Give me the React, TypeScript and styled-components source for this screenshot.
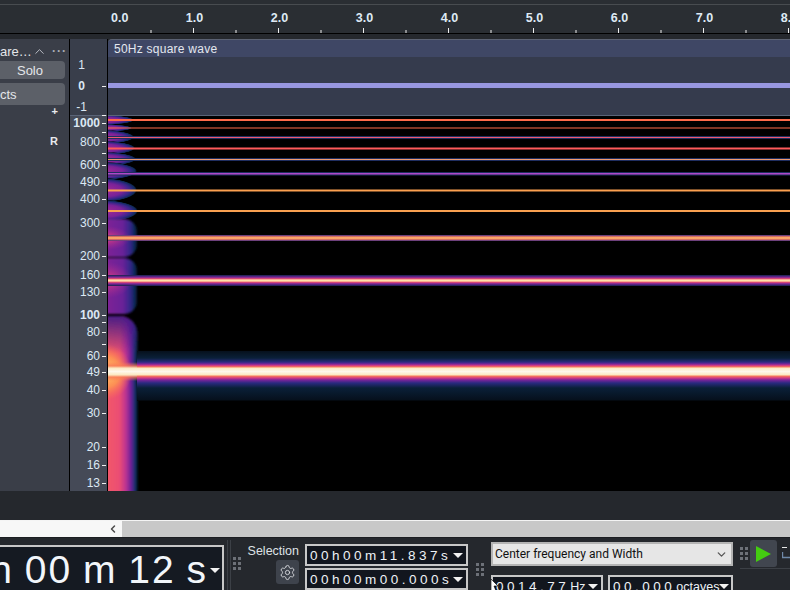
import React from 'react'
import styled, { createGlobalStyle } from 'styled-components'
import { ChevronDown, ChevronLeft, ChevronUp, Settings } from 'lucide-react'

const GlobalStyle = createGlobalStyle`
  html, body {
    margin: 0;
    padding: 0;
    background: #25282d;
    overflow: hidden;
  }
  * {
    box-sizing: border-box;
  }
`

const Page = styled.div`
  width: 790px;
  height: 590px;
  display: flex;
  flex-direction: column;
  overflow: hidden;
  background: #25282d;
  font-family: 'Liberation Sans', Arial, sans-serif;
`

const TopStrip = styled.div`
  height: 5px;
  flex: none;
  background: #2a2e33;
  border-bottom: 1px solid #484c50;
`

const Ruler = styled.div`
  height: 29px;
  flex: none;
  position: relative;
  background: #2a2e33;
  border-bottom: 1px solid #000;
`

const RulerLabels = styled.div`
  display: flex;
  padding: 6px 0 0 111px;
  color: #dfeaf5;
  font-size: 12.5px;
  font-weight: bold;
  line-height: 14px;
  white-space: nowrap;
`

const RulerLabel = styled.span<{ $first?: boolean }>`
  flex: none;
  width: ${({ $first }) => ($first ? '41px' : '85px')};
  text-align: ${({ $first }) => ($first ? 'left' : 'center')};
`

const RulerTicks = styled.svg`
  position: absolute;
  left: 0;
  bottom: 0;
`

const Gap = styled.div`
  height: 5px;
  flex: none;
  background: #25282d;
`

const TrackRow = styled.div`
  height: 452px;
  flex: none;
  display: flex;
`

const TrackPanel = styled.div`
  width: 70px;
  flex: none;
  display: flex;
  flex-direction: column;
  align-items: stretch;
  background: #3a3e48;
  border-right: 1px solid #000;
  overflow: hidden;
  color: #e4e6ea;
`

const TrackTitle = styled.div`
  height: 22px;
  display: flex;
  align-items: center;
  font-size: 13px;
  white-space: nowrap;
  padding-top: 2px;
`

const TrackName = styled.span`
  width: 32px;
`

const Dots = styled.span`
  margin-left: 5px;
  letter-spacing: 1px;
  font-size: 12px;
  line-height: 6px;
  color: #a8acb4;
  font-weight: bold;
`

const PanelButton = styled.div<{ $tall?: boolean; $center?: boolean }>`
  height: ${({ $tall }) => ($tall ? '22px' : '18px')};
  width: 65px;
  margin-bottom: ${({ $tall }) => ($tall ? '0' : '4px')};
  border-radius: 0 4px 4px 0;
  background: #5c6068;
  font-size: 13px;
  display: flex;
  align-items: center;
  justify-content: ${({ $center }) => ($center ? 'flex-end' : 'flex-start')};
  padding-right: ${({ $center }) => ($center ? '22px' : '0')};
`

const SmallMark = styled.div<{ $gap: number }>`
  width: 58px;
  margin-top: ${({ $gap }) => $gap}px;
  text-align: right;
  font-size: 11px;
  line-height: 12px;
  font-weight: bold;
  color: #e8eaee;
`

const VScale = styled.div`
  width: 38px;
  flex: none;
  display: flex;
  flex-direction: column;
  border-right: 1px solid #000;
`

const ScaleZone = styled.div<{ $wave?: boolean }>`
  position: relative;
  flex: none;
  height: ${({ $wave }) => ($wave ? '77px' : '375px')};
  background: ${({ $wave }) => ($wave ? '#393e4b' : '#454a57')};
  border-bottom: ${({ $wave }) => ($wave ? '1px solid #5a6478' : 'none')};
`

const ScaleMark = styled.div<{ $y: number; $strong?: boolean }>`
  position: absolute;
  right: 0;
  top: ${({ $y }) => $y}px;
  height: 14px;
  margin-top: -7px;
  display: flex;
  align-items: center;
  gap: 2px;
  font-size: 12px;
  line-height: 14px;
  color: #dce8f4;
  font-weight: ${({ $strong }) => ($strong ? 'bold' : 'normal')};

  &::after {
    content: '';
    width: 4px;
    height: 1px;
    background: #f0f0f0;
    margin-right: 1px;
  }
`

const WaveMark = styled.div<{ $y: number; $strong?: boolean }>`
  position: absolute;
  left: 0;
  width: 23px;
  top: ${({ $y }) => $y}px;
  margin-top: -7px;
  text-align: center;
  font-size: 12px;
  line-height: 14px;
  color: #dce8f4;
  font-weight: ${({ $strong }) => ($strong ? 'bold' : 'normal')};
`

const ClipColumn = styled.div`
  flex: 1;
  min-width: 0;
  display: flex;
  flex-direction: column;
`

const ClipHeader = styled.div`
  height: 18px;
  flex: none;
  padding: 2px 0 0 6px;
  border-top: 1px solid #5b6273;
  border-top-left-radius: 4px;
  background: #3f4765;
  color: #e4e8f0;
  font-size: 12px;
  line-height: 14px;
  letter-spacing: 0.25px;
`

const WaveArea = styled.div`
  height: 59px;
  flex: none;
  padding-top: 26px;
  background: #353b4d;
  border-bottom: 1px solid #5a6478;
`

const WaveLine = styled.div`
  height: 5px;
  background: #9897e0;
`

const Spectrogram = styled.svg`
  display: block;
  flex: none;
`

const Band = styled.div`
  height: 29px;
  flex: none;
  background: #25282d;
`

const ScrollRow = styled.div`
  height: 17px;
  flex: none;
  display: flex;
  border-top: 1px solid #f4f4f4;
  background: #c8c8c8;
`

const ScrollTrack = styled.div`
  width: 122px;
  flex: none;
  display: flex;
  align-items: center;
  justify-content: flex-end;
  padding-right: 3px;
  background: #f7f7f7;
  color: #4a4a4a;
`

const Toolbar = styled.div`
  flex: 1;
  display: flex;
  align-items: flex-start;
  min-height: 0;
  border-top: 1px solid #1c1e22;
`

const BigClock = styled.div`
  width: 224px;
  height: 52px;
  margin-top: 7px;
  flex: none;
  display: flex;
  justify-content: flex-end;
  align-items: flex-start;
  gap: 2px;
  overflow: hidden;
  padding-right: 2px;
  background: #151a22;
  border: 2px solid #c8c8c8;
  border-left: none;
  color: #f2f6fa;
  font-size: 39px;
  line-height: 45px;
  letter-spacing: 2px;
  word-spacing: -2px;
  white-space: pre;
`

const Caret = styled.span`
  flex: none;
  width: 0;
  height: 0;
  border-left: 5px solid transparent;
  border-right: 5px solid transparent;
  border-top: 5px solid #f2f2f2;
`

const BigCaret = styled(Caret)`
  margin-top: 21px;
`

const DoubleRule = styled.div`
  width: 4px;
  height: 53px;
  margin: 2px 1px 0 3px;
  flex: none;
  border-left: 1px solid #3c4046;
  border-right: 1px solid #3c4046;
`

const Grip = styled.div<{ $top: number; $left: number }>`
  flex: none;
  display: grid;
  grid-template-columns: 3px 3px;
  grid-auto-rows: 3px;
  column-gap: 2px;
  row-gap: 2px;
  margin: ${({ $top }) => $top}px 0 0 ${({ $left }) => $left}px;

  span {
    background: #6d7178;
  }
`

const SelectionBlock = styled.div`
  width: 51px;
  margin-left: 7px;
  flex: none;
  display: flex;
  flex-direction: column;
  align-items: flex-end;
`

const SelectionLabel = styled.div`
  margin-top: 6px;
  color: #dfe2e6;
  font-size: 12.5px;
  line-height: 15px;
  white-space: nowrap;
`

const GearButton = styled.div`
  width: 23px;
  height: 24px;
  margin-top: 1px;
  display: flex;
  align-items: center;
  justify-content: center;
  border-radius: 3px;
  background: #3e434c;
  color: #d8dade;
`

const FieldStack = styled.div`
  width: 163px;
  margin: 6px 0 0 6px;
  flex: none;
  display: flex;
  flex-direction: column;
  gap: 2px;
`

const Field = styled.div<{ $width?: number }>`
  height: 22px;
  width: ${({ $width }) => ($width ? `${$width}px` : '100%')};
  flex: none;
  display: flex;
  align-items: center;
  justify-content: space-between;
  padding: 0 3px;
  background: #12161e;
  border: 2px solid #c8c8c8;
  color: #eef2f6;
  font-size: 13.5px;
  letter-spacing: 3.5px;
  white-space: pre;
  overflow: hidden;
`

const Unit = styled.span`
  letter-spacing: 0;
  font-size: 12.5px;
  margin-left: 1px;
`

const FrequencyBlock = styled.div`
  width: 242px;
  margin: 4px 0 0 7px;
  flex: none;
  display: flex;
  flex-direction: column;
  gap: 9px;
  position: relative;
`

const Combo = styled.div`
  height: 24px;
  display: flex;
  align-items: center;
  justify-content: space-between;
  padding: 0 3px 0 2px;
  border: 2px solid #b4b4b4;
  background: #e6e6e6;
  color: #111;
  font-family: Roboto, sans-serif;
  font-size: 12px;
`

const FieldRow = styled.div`
  display: flex;
  gap: 5px;
`

const PointerIcon = styled.svg`
  position: absolute;
  left: 0;
  top: 37px;
`

const TransportBlock = styled.div`
  flex: 1;
  min-width: 0;
  margin-top: 2px;
  display: flex;
  flex-direction: column;
  overflow: hidden;
`

const TransportRow = styled.div`
  display: flex;
  height: 29px;
  border-bottom: 1px solid #3c4046;
  margin-left: 7px;
`

const PlayButton = styled.div`
  width: 27px;
  height: 27px;
  flex: none;
  margin-left: 2px;
  display: flex;
  align-items: center;
  justify-content: center;
  border-radius: 3px;
  background: #41464f;
`

const LoopIcon = styled.svg`
  flex: none;
  margin: 3px 0 0 5px;
`

const ticks = [1, 2, 3, 4, 5, 6, 7, 8]

const rulerTicks = Array.from({ length: 17 }, (_, i) => i).filter((i) => i > 0)

const waveMarks = [
  { y: 26, label: '1' },
  { y: 47, label: '0', strong: true },
  { y: 68, label: '-1' },
]

const waveTicks = [47, 76]

const freqMarks = [
  { y: 7, label: '1000', strong: true },
  { y: 16, label: '' },
  { y: 26, label: '800' },
  { y: 37, label: '' },
  { y: 49, label: '600' },
  { y: 66, label: '490' },
  { y: 83, label: '400' },
  { y: 107, label: '300' },
  { y: 140, label: '200' },
  { y: 159, label: '160' },
  { y: 176, label: '130' },
  { y: 199, label: '100', strong: true },
  { y: 206, label: '' },
  { y: 216, label: '80' },
  { y: 228, label: '' },
  { y: 240, label: '60' },
  { y: 256, label: '49' },
  { y: 274, label: '40' },
  { y: 297, label: '30' },
  { y: 331, label: '20' },
  { y: 349, label: '16' },
  { y: 367, label: '13' },
]

// y, height and colour of each harmonic, in page coordinates
const harmonics = [
  { y: 119, h: 2, color: '#ff6a4a' },
  { y: 127.5, h: 1, color: '#ff6a4a' },
  { y: 137, h: 1, color: '#ee5a70', halo: true },
  { y: 147.5, h: 2, color: '#ff5a5a' },
  { y: 159, h: 1, color: '#f09a70', halo: true },
  { y: 173, h: 1.5, color: '#b048c8', halo: true },
  { y: 189.5, h: 2, color: '#fba050' },
  { y: 210, h: 2, color: '#f8a050' },
]

const blobs = [
  { y: 120, ry: 5, rx: 34 },
  { y: 128, ry: 4, rx: 32 },
  { y: 137, ry: 7, rx: 34 },
  { y: 148, ry: 7, rx: 35 },
  { y: 159, ry: 7, rx: 36 },
  { y: 171, ry: 9, rx: 37 },
  { y: 190, ry: 12, rx: 37 },
  { y: 211, ry: 11, rx: 38 },
]

const bigBlobs = [
  { y: 219, h: 38 },
  { y: 258, h: 56 },
]

const Grips: React.FC<{ top: number; left: number }> = ({ top, left }) => (
  <Grip $top={top} $left={left}>
    {Array.from({ length: 6 }, (_, i) => (
      <span key={i} />
    ))}
  </Grip>
)

const SpectrogramView: React.FC = () => (
  <Spectrogram width="682" height="375" viewBox="108 116 682 375">
    <defs>
      <radialGradient id="blobFill">
        <stop offset="0" stopColor="#a82c94" />
        <stop offset="0.6" stopColor="#7a2298" />
        <stop offset="0.82" stopColor="#36268a" />
        <stop offset="0.95" stopColor="#0f2a58" />
        <stop offset="1" stopColor="#000" />
      </radialGradient>
      <linearGradient id="bigFill" gradientUnits="userSpaceOnUse" x1="108" x2="137" y1="0" y2="0">
        <stop offset="0" stopColor="#7c2296" />
        <stop offset="0.5" stopColor="#6a2298" />
        <stop offset="0.76" stopColor="#36268a" />
        <stop offset="0.92" stopColor="#0f2a58" />
        <stop offset="1" stopColor="#081a30" />
      </linearGradient>
      <radialGradient id="lineGlow">
        <stop offset="0" stopColor="#e0407c" />
        <stop offset="1" stopColor="#a82c94" stopOpacity="0" />
      </radialGradient>
      <linearGradient id="lowFill" gradientUnits="userSpaceOnUse" x1="108" x2="137" y1="0" y2="0">
        <stop offset="0" stopColor="#f2566a" />
        <stop offset="0.4" stopColor="#ea4e74" />
        <stop offset="0.6" stopColor="#c03490" />
        <stop offset="0.8" stopColor="#6a2299" />
        <stop offset="0.93" stopColor="#12306a" />
        <stop offset="1" stopColor="#0a2238" />
      </linearGradient>
      <linearGradient id="lowTop" gradientUnits="userSpaceOnUse" x1="0" x2="0" y1="316" y2="354">
        <stop offset="0" stopColor="#401a86" stopOpacity="0.95" />
        <stop offset="1" stopColor="#401a86" stopOpacity="0" />
      </linearGradient>
      <radialGradient id="hotSpot">
        <stop offset="0" stopColor="#ffc868" />
        <stop offset="0.55" stopColor="#ff9a50" stopOpacity="0.85" />
        <stop offset="1" stopColor="#ff7050" stopOpacity="0" />
      </radialGradient>
      <linearGradient id="coreBand" x1="0" x2="0" y1="0" y2="1">
        <stop offset="0" stopColor="#fa7a58" stopOpacity="0" />
        <stop offset="0.2" stopColor="#fa7a58" stopOpacity="0.8" />
        <stop offset="0.32" stopColor="#fbe8c0" />
        <stop offset="0.5" stopColor="#fff8ec" />
        <stop offset="0.68" stopColor="#fbe8c0" />
        <stop offset="0.8" stopColor="#fa7a58" stopOpacity="0.8" />
        <stop offset="1" stopColor="#fa7a58" stopOpacity="0" />
      </linearGradient>
      <linearGradient id="mainLine" x1="0" x2="0" y1="0" y2="1">
        <stop offset="0" stopColor="#06101c" />
        <stop offset="0.14" stopColor="#0a2038" />
        <stop offset="0.22" stopColor="#2a2a80" />
        <stop offset="0.26" stopColor="#7a249a" />
        <stop offset="0.29" stopColor="#d03a84" />
        <stop offset="0.32" stopColor="#fa7a58" />
        <stop offset="0.34" stopColor="#fbe8c0" />
        <stop offset="0.41" stopColor="#fff8ec" />
        <stop offset="0.48" stopColor="#fbe8c0" />
        <stop offset="0.5" stopColor="#fa7a58" />
        <stop offset="0.54" stopColor="#d03a84" />
        <stop offset="0.58" stopColor="#7a249a" />
        <stop offset="0.64" stopColor="#2a2a80" />
        <stop offset="0.74" stopColor="#0a2038" />
        <stop offset="0.98" stopColor="#06101c" />
        <stop offset="1" stopColor="#000" />
      </linearGradient>
      <linearGradient id="midLine" x1="0" x2="0" y1="0" y2="1">
        <stop offset="0" stopColor="#12244c" />
        <stop offset="0.2" stopColor="#7a249a" />
        <stop offset="0.36" stopColor="#f0506c" />
        <stop offset="0.44" stopColor="#ffe0a8" />
        <stop offset="0.56" stopColor="#ffe0a8" />
        <stop offset="0.64" stopColor="#f0506c" />
        <stop offset="0.8" stopColor="#7a249a" />
        <stop offset="1" stopColor="#12244c" />
      </linearGradient>
      <linearGradient id="lowLine" x1="0" x2="0" y1="0" y2="1">
        <stop offset="0" stopColor="#3a2a88" />
        <stop offset="0.3" stopColor="#f07a5a" />
        <stop offset="0.5" stopColor="#ffc070" />
        <stop offset="0.7" stopColor="#f07a5a" />
        <stop offset="1" stopColor="#3a2a88" />
      </linearGradient>
      <filter id="soft" x="-20%" y="-20%" width="140%" height="140%">
        <feGaussianBlur stdDeviation="1.2" />
      </filter>
    </defs>
    <rect x="108" y="116" width="682" height="375" fill="#000" />
    {blobs.map((b) => (
      <ellipse key={b.y} cx="100" cy={b.y} rx={b.rx} ry={b.ry} fill="url(#blobFill)" />
    ))}
    <g filter="url(#soft)">
      {bigBlobs.map((b) => (
        <rect key={b.y} x="90" y={b.y} width="47" height={b.h} rx="13" fill="url(#bigFill)" />
      ))}
    </g>
    <ellipse cx="108" cy="238" rx="22" ry="12" fill="url(#lineGlow)" />
    <ellipse cx="108" cy="280" rx="24" ry="18" fill="url(#lineGlow)" />
    <g filter="url(#soft)">
      <rect x="90" y="316" width="47.5" height="190" rx="18" fill="url(#lowFill)" />
      <rect x="90" y="316" width="47.5" height="60" rx="18" fill="url(#lowTop)" />
    </g>
    <ellipse cx="106" cy="372" rx="26" ry="28" fill="url(#hotSpot)" />
    <rect x="137" y="351" width="653" height="50" fill="url(#mainLine)" />
    <rect x="108" y="362" width="29" height="19" fill="url(#coreBand)" />
    <rect x="108" y="275" width="682" height="11" fill="url(#midLine)" />
    <rect x="108" y="235" width="682" height="6" fill="url(#lowLine)" />
    {harmonics.map((l) => (
      <g key={l.y}>
        {l.halo && <rect x="108" y={l.y - 1} width="682" height={l.h + 2} fill="#1f2e60" />}
        <rect x="108" y={l.y} width="682" height={l.h} fill={l.color} />
      </g>
    ))}
  </Spectrogram>
)

const App: React.FC = () => (
  <Page>
    <GlobalStyle />
    <TopStrip />
    <Ruler>
      <RulerLabels>
        <RulerLabel $first>0.0</RulerLabel>
        {ticks.map((t) => (
          <RulerLabel key={t}>{t}.0</RulerLabel>
        ))}
      </RulerLabels>
      <RulerTicks width="790" height="6" viewBox="0 0 790 6">
        {rulerTicks.map((i) => (
          <rect
            key={i}
            x={108 + i * 42.5}
            y={i % 2 ? 3 : 1}
            width="1"
            height={i % 2 ? 3 : 5}
            fill="#eee"
          />
        ))}
      </RulerTicks>
    </Ruler>
    <Gap />
    <TrackRow>
      <TrackPanel>
        <TrackTitle>
          <TrackName>are…</TrackName>
          <ChevronUp size={15} strokeWidth={1.4} color="#c8ccd2" />
          <Dots>···</Dots>
        </TrackTitle>
        <PanelButton $center>Solo</PanelButton>
        <PanelButton $tall>cts</PanelButton>
        <SmallMark $gap={0}>+</SmallMark>
        <SmallMark $gap={18}>R</SmallMark>
      </TrackPanel>
      <VScale>
        <ScaleZone $wave>
          {waveMarks.map((m) => (
            <WaveMark key={m.label} $y={m.y} $strong={m.strong}>
              {m.label}
            </WaveMark>
          ))}
          {waveTicks.map((y) => (
            <ScaleMark key={y} $y={y} />
          ))}
        </ScaleZone>
        <ScaleZone>
          {freqMarks.map((m) => (
            <ScaleMark key={m.y} $y={m.y} $strong={m.strong}>
              {m.label}
            </ScaleMark>
          ))}
        </ScaleZone>
      </VScale>
      <ClipColumn>
        <ClipHeader>50Hz square wave</ClipHeader>
        <WaveArea>
          <WaveLine />
        </WaveArea>
        <SpectrogramView />
      </ClipColumn>
    </TrackRow>
    <Band />
    <ScrollRow>
      <ScrollTrack>
        <ChevronLeft size={12} strokeWidth={3} />
      </ScrollTrack>
    </ScrollRow>
    <Toolbar>
      <BigClock>
        h 00 m 12 s
        <BigCaret />
      </BigClock>
      <DoubleRule />
      <Grips top={19} left={1} />
      <SelectionBlock>
        <SelectionLabel>Selection</SelectionLabel>
        <GearButton>
          <Settings size={17} strokeWidth={1.3} />
        </GearButton>
      </SelectionBlock>
      <FieldStack>
        <Field>
          00h00m11.837s
          <Caret />
        </Field>
        <Field>
          00h00m00.000s
          <Caret />
        </Field>
      </FieldStack>
      <Grips top={25} left={8} />
      <FrequencyBlock>
        <Combo>
          Center frequency and Width
          <ChevronDown size={13} strokeWidth={2.4} color="#555" />
        </Combo>
        <FieldRow>
          <Field $width={112}>
            <span>
              0014.77<Unit>Hz</Unit>
            </span>
            <Caret />
          </Field>
          <Field $width={125}>
            <span>
              00.000<Unit>octaves</Unit>
            </span>
            <Caret />
          </Field>
        </FieldRow>
        <PointerIcon width="8" height="12" viewBox="0 0 8 12">
          <path d="M0 0 L7 7 L3 7 L5 12 L0 12 Z" fill="#fff" stroke="#000" strokeWidth="0.6" />
        </PointerIcon>
      </FrequencyBlock>
      <TransportBlock>
        <TransportRow>
          <Grips top={7} left={0} />
          <PlayButton>
            <svg width="17" height="16" viewBox="0 0 17 16">
              <path d="M1 0 L16 8 L1 16 Z" fill="#44cc11" />
            </svg>
          </PlayButton>
          <LoopIcon width="12" height="20" viewBox="0 0 12 20">
            <rect x="0" y="4" width="5" height="1" fill="#e8e8e8" />
            <path d="M0.5 9 V14.5 H12" fill="none" stroke="#6f89a8" strokeWidth="1.4" />
          </LoopIcon>
        </TransportRow>
      </TransportBlock>
    </Toolbar>
  </Page>
)

export default App
